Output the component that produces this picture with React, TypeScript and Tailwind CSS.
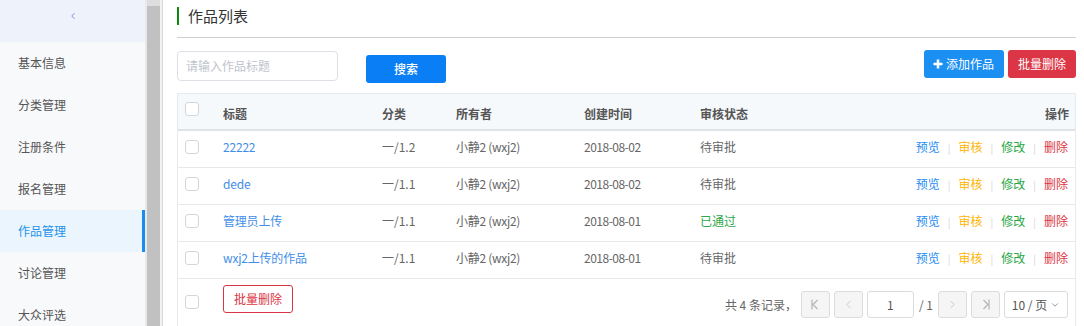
import { ChevronLeft, ChevronRight, ChevronDown } from "lucide-react";

const menus = ["基本信息", "分类管理", "注册条件", "报名管理", "作品管理", "讨论管理", "大众评选"];

const rows = [
    { title: "22222", cat: "一/1.2", owner: "小静2 (wxj2)", date: "2018-08-02", status: "待审批" },
    { title: "dede", cat: "一/1.1", owner: "小静2 (wxj2)", date: "2018-08-02", status: "待审批" },
    { title: "管理员上传", cat: "一/1.1", owner: "小静2 (wxj2)", date: "2018-08-01", status: "已通过" },
    { title: "wxj2上传的作品", cat: "一/1.1", owner: "小静2 (wxj2)", date: "2018-08-01", status: "待审批" },
];

function Check() {
    return <span className="block w-[14px] h-[14px] rounded-[3px] border border-[#d6d6d6] bg-white" />;
}

function PageBtn({ children }: { children: React.ReactNode }) {
    return (
        <span className="w-[29px] h-[27px] flex items-center justify-center rounded-[3px] border border-[#dcdcdc] bg-[#f5f5f5] text-[#b5b5b5]">
            {children}
        </span>
    );
}

export default function App() {
    return (
        <div className="w-[1084px] h-[326px] overflow-hidden flex bg-white text-[12px] font-['Noto_Sans_CJK_SC',sans-serif]">
            {/* Sidebar */}
            <aside className="w-[145px] shrink-0 bg-[#f8f9fb] flex flex-col">
                <div className="h-[42px] shrink-0 bg-[#eef3fb] flex items-center justify-center text-[#5d7ed8]">
                    <ChevronLeft size={10} strokeWidth={2} className="mb-[11px]" />
                </div>
                {menus.map((m) => {
                    const active = m === "作品管理";
                    return (
                        <div
                            key={m}
                            className={`h-[42px] shrink-0 flex items-center pl-[18px] text-[12px] ${active ? "bg-[#eaf5fe] text-[#2391ec] border-r-[3px] border-[#1a8cf0]" : "text-[#555]"}`}
                        >
                            {m}
                        </div>
                    );
                })}
            </aside>

            {/* scrollbar strip */}
            <div className="w-[2px] shrink-0 bg-[#e9e9ec]" />
            <div className="w-[13px] shrink-0 flex flex-col bg-[#c1c1c1]">
                <div className="h-[6px] bg-[#dedede]" />
            </div>
            <div className="w-[2px] shrink-0 bg-[#f1f1f3]" />
            <div className="w-[1px] shrink-0 bg-[#d8d8dc]" />

            {/* Main */}
            <main className="flex-1 pl-[14px] pr-[8px] flex flex-col min-w-0">
                <div className="h-[38px] shrink-0 flex items-center border-b border-[#cfcfcf]">
                    <span className="w-[2px] h-[18px] bg-[#0a8a0a] mr-[9px] -mt-[5px]" />
                    <h1 className="text-[15px] text-[#333] -mt-[5px]">作品列表</h1>
                </div>

                <div className="h-[55px] shrink-0 flex items-start">
                    <div className="mt-[13px] w-[161px] h-[30px] rounded-[4px] border border-[#dcdfe6] flex items-center pl-[8px] text-[12px] text-[#c0c4cc]">
                        请输入作品标题
                    </div>
                    <button className="mt-[17px] ml-[28px] w-[80px] h-[28px] rounded-[3px] bg-[#0a7ff5] text-white text-[12px] font-medium">
                        搜索
                    </button>
                    <div className="ml-auto mt-[12px] flex gap-[4px]">
                        <button className="h-[28px] pl-[9px] pr-[10px] rounded-[3px] bg-[#1c8ff2] text-white text-[12px] flex items-center gap-[3px]">
                            <svg width="10" height="10" viewBox="0 0 10 10">
                                <path d="M5 0.5v9M0.5 5h9" stroke="white" strokeWidth="2.6" />
                            </svg>
                            添加作品
                        </button>
                        <button className="h-[28px] px-[10px] rounded-[3px] bg-[#dc3545] text-white text-[12px]">
                            批量删除
                        </button>
                    </div>
                </div>

                {/* Table */}
                <div className="flex-1 border-x border-t border-[#e6e9ed] flex flex-col">
                    <div className="h-[37px] shrink-0 flex items-start bg-[#f6f9fc] border-b-2 border-[#dfe3e8] font-bold text-[#555]">
                        <div className="w-[45px] pl-[7px] mt-[8px]"><Check /></div>
                        <div className="flex-1 flex mt-[11px]">
                            <div className="w-[159px]">标题</div>
                            <div className="w-[74px]">分类</div>
                            <div className="w-[128px]">所有者</div>
                            <div className="w-[116px]">创建时间</div>
                            <div className="flex-1">审核状态</div>
                            <div className="pr-[6px]">操作</div>
                        </div>
                    </div>
                    {rows.map((r) => (
                        <div key={r.title} className="h-[37px] shrink-0 flex items-center pb-[4px] border-b border-[#e8e8e8] text-[#666]">
                            <div className="w-[45px] pl-[7px]"><Check /></div>
                            <div className="w-[159px] text-[#3f8ee8] tracking-[-0.2px]">{r.title}</div>
                            <div className="w-[74px]">{r.cat}</div>
                            <div className="w-[128px] tracking-[-0.3px]">{r.owner}</div>
                            <div className="w-[116px] tracking-[-0.5px]">{r.date}</div>
                            <div className={`flex-1 ${r.status === "已通过" ? "text-[#2ea84a]" : ""}`}>{r.status}</div>
                            <div className="pr-[7px] flex items-center gap-[8px]">
                                <span className="text-[#1e8cf5]">预览</span>
                                <span className="text-[#d5d5d5] text-[10px]">|</span>
                                <span className="text-[#ffb400]">审核</span>
                                <span className="text-[#d5d5d5] text-[10px]">|</span>
                                <span className="text-[#28a745]">修改</span>
                                <span className="text-[#d5d5d5] text-[10px]">|</span>
                                <span className="text-[#dc3545]">删除</span>
                            </div>
                        </div>
                    ))}
                    <div className="flex items-start">
                        <div className="w-[45px] pl-[7px] mt-[16px]"><Check /></div>
                        <button className="mt-[6px] h-[28px] px-[10px] rounded-[3px] border border-[#dc3545] text-[#dc3545] text-[12px]">
                            批量删除
                        </button>
                        <div className="ml-auto mr-[7px] mt-[12px] flex items-center gap-[4px] text-[#666]">
                            <span>共 4 条记录，</span>
                            <PageBtn>
                                <svg width="10" height="11" viewBox="0 0 10 11" fill="none" stroke="currentColor" strokeWidth="1.2">
                                    <path d="M2 0.5v10M7.5 1L3 5.5l4.5 4.5" />
                                </svg>
                            </PageBtn>
                            <PageBtn><ChevronLeft size={13} strokeWidth={1.3} /></PageBtn>
                            <span className="w-[47px] h-[27px] flex items-center justify-center rounded-[3px] border border-[#dcdcdc] bg-white text-[#555]">1</span>
                            <span className="mx-[1px]">/ 1</span>
                            <PageBtn><ChevronRight size={13} strokeWidth={1.3} /></PageBtn>
                            <PageBtn>
                                <svg width="10" height="11" viewBox="0 0 10 11" fill="none" stroke="currentColor" strokeWidth="1.2">
                                    <path d="M8 0.5v10M2.5 1L7 5.5l-4.5 4.5" />
                                </svg>
                            </PageBtn>
                            <span className="w-[64px] h-[27px] flex items-center justify-center gap-[3px] rounded-[3px] border border-[#dcdcdc] bg-white text-[#555]">
                                10 / 页 <ChevronDown size={10} strokeWidth={1.5} />
                            </span>
                        </div>
                    </div>
                </div>
            </main>
        </div>
    );
}
